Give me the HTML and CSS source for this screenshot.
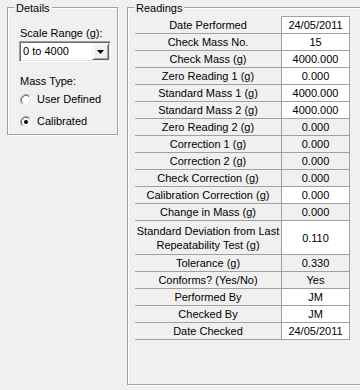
FILE: index.html
```html
<!DOCTYPE html>
<html lang="en">
<head>
    <meta charset="UTF-8">
    <meta name="viewport" content="width=device-width, initial-scale=1.0">
    <title>Check Mass Readings</title>
    <link rel="stylesheet" href="styles.css">
</head>
<body>
    <div class="window">
        <div class="group details">
            <span class="group-title">Details</span>
            <div class="scale-label">Scale Range (g):</div>
            <div class="combo">
                <span class="combo-text">0 to 4000</span>
                <span class="combo-button">
                    <svg width="7" height="4" viewBox="0 0 7 4"><polygon points="0,0 7,0 3.5,4" fill="#000"/></svg>
                </span>
            </div>
            <div class="mass-label">Mass Type:</div>
            <div class="radio first-radio">
                <svg class="radio-mark" width="12" height="12" viewBox="0 0 12 12">
                    <circle cx="6" cy="6" r="4.5" fill="#fff"/>
                    <path d="M2.11 9.89A5.5 5.5 0 0 1 9.89 2.11" fill="none" stroke="#a0a0a0"/>
                    <path d="M9.89 2.11A5.5 5.5 0 0 1 2.11 9.89" fill="none" stroke="#fff"/>
                    <path d="M2.82 9.18A4.5 4.5 0 0 1 9.18 2.82" fill="none" stroke="#696969"/>
                    <path d="M9.18 2.82A4.5 4.5 0 0 1 2.82 9.18" fill="none" stroke="#e3e3e3"/>
                </svg>
                <span>User Defined</span>
            </div>
            <div class="radio second-radio">
                <svg class="radio-mark" width="12" height="12" viewBox="0 0 12 12">
                    <circle cx="6" cy="6" r="4.5" fill="#fff"/>
                    <path d="M2.11 9.89A5.5 5.5 0 0 1 9.89 2.11" fill="none" stroke="#a0a0a0"/>
                    <path d="M9.89 2.11A5.5 5.5 0 0 1 2.11 9.89" fill="none" stroke="#fff"/>
                    <path d="M2.82 9.18A4.5 4.5 0 0 1 9.18 2.82" fill="none" stroke="#696969"/>
                    <path d="M9.18 2.82A4.5 4.5 0 0 1 2.82 9.18" fill="none" stroke="#e3e3e3"/>
                    <circle cx="6" cy="6" r="2" fill="#000"/>
                </svg>
                <span>Calibrated</span>
            </div>
        </div>

        <div class="group readings">
            <span class="group-title">Readings</span>
            <div class="grid">
                <div class="row first"><div class="cell label">Date Performed</div><div class="cell value edit">24/05/2011</div></div>
                <div class="row"><div class="cell label">Check Mass No.</div><div class="cell value edit">15</div></div>
                <div class="row"><div class="cell label">Check Mass (g)</div><div class="cell value edit">4000.000</div></div>
                <div class="row"><div class="cell label">Zero Reading 1 (g)</div><div class="cell value edit">0.000</div></div>
                <div class="row"><div class="cell label">Standard Mass 1 (g)</div><div class="cell value edit">4000.000</div></div>
                <div class="row"><div class="cell label">Standard Mass 2 (g)</div><div class="cell value edit">4000.000</div></div>
                <div class="row"><div class="cell label">Zero Reading 2 (g)</div><div class="cell value">0.000</div></div>
                <div class="row"><div class="cell label">Correction 1 (g)</div><div class="cell value">0.000</div></div>
                <div class="row"><div class="cell label">Correction 2 (g)</div><div class="cell value">0.000</div></div>
                <div class="row"><div class="cell label">Check Correction (g)</div><div class="cell value">0.000</div></div>
                <div class="row"><div class="cell label">Calibration Correction (g)</div><div class="cell value edit">0.000</div></div>
                <div class="row"><div class="cell label">Change in Mass (g)</div><div class="cell value">0.000</div></div>
                <div class="row tall"><div class="cell label">Standard Deviation from Last<br>Repeatability Test (g)</div><div class="cell value edit">0.110</div></div>
                <div class="row"><div class="cell label">Tolerance (g)</div><div class="cell value">0.330</div></div>
                <div class="row"><div class="cell label">Conforms? (Yes/No)</div><div class="cell value">Yes</div></div>
                <div class="row"><div class="cell label">Performed By</div><div class="cell value edit">JM</div></div>
                <div class="row"><div class="cell label">Checked By</div><div class="cell value edit">JM</div></div>
                <div class="row"><div class="cell label">Date Checked</div><div class="cell value edit">24/05/2011</div></div>
            </div>
        </div>
    </div>
</body>
</html>
```

FILE: styles.css
```css
html, body {
    margin: 0;
}
body {
    width: 360px;
    height: 390px;
    overflow: hidden;
    background: #f0f0f0;
    font-family: "Liberation Sans", Arial, sans-serif;
    font-size: 11px;
    color: #000;
}
.window {
    display: flex;
    align-items: flex-start;
    gap: 9px;
    padding: 7px 0 0 7px;
}

/* etched group box */
.group {
    box-sizing: border-box;
    flex: none;
    display: flex;
    flex-direction: column;
    align-items: flex-start;
    border: 1px solid #a0a0a0;
    box-shadow: inset 1px 1px 0 #fff, 1px 1px 0 #fff;
}
.group-title {
    line-height: 13px;
    margin: -6px 0 0 6px;
    padding: 0 2px;
    background: #f0f0f0;
}
.details {
    width: 111px;
    height: 128px;
}
.readings {
    width: 240px;
    height: 378px;
}

/* details */
.scale-label,
.mass-label {
    line-height: 13px;
    margin-left: 12px;
}
.scale-label {
    margin-top: 12px;
}
.mass-label {
    margin-top: 13px;
}
.combo {
    box-sizing: border-box;
    width: 92px;
    height: 21px;
    margin: 1px 0 0 11px;
    display: flex;
    align-items: center;
    justify-content: space-between;
    background: #fff;
    border: 1px solid;
    border-color: #a0a0a0 #fff #fff #a0a0a0;
    box-shadow: inset 1px 1px 0 #696969, inset -1px -1px 0 #e3e3e3;
    padding: 1px;
}
.combo-text {
    padding-left: 2px;
    line-height: 13px;
}
.combo-button {
    box-sizing: border-box;
    width: 17px;
    height: 17px;
    display: flex;
    align-items: center;
    justify-content: center;
    background: #f0f0f0;
    border: 1px solid;
    border-color: #f0f0f0 #696969 #696969 #f0f0f0;
    box-shadow: inset 1px 1px 0 #fff, inset -1px -1px 0 #a0a0a0;
    padding-right: 1px;
}
.radio {
    display: flex;
    align-items: center;
    gap: 5px;
    height: 13px;
    line-height: 13px;
    margin-left: 12px;
}
.first-radio {
    margin-top: 5px;
}
.second-radio {
    margin-top: 9px;
}
.radio-mark {
    flex: none;
}

/* readings grid */
.grid {
    width: 215px;
    margin: 1px 0 0 7px;
}
.row {
    display: flex;
}
.cell {
    box-sizing: border-box;
    height: 17px;
    display: flex;
    align-items: center;
    justify-content: center;
    text-align: center;
    line-height: 16px;
    border-right: 1px solid #a0a0a0;
    border-bottom: 1px solid #a0a0a0;
}
.label {
    width: 147px;
}
.value {
    width: 68px;
    background: #f0f0f0;
}
.value.edit {
    background: #fff;
}
.first .cell {
    height: 18px;
    border-top: 1px solid #a0a0a0;
}
.first .label {
    border-top-color: transparent;
}
.tall .cell {
    height: 34px;
    line-height: 14px;
}
```
